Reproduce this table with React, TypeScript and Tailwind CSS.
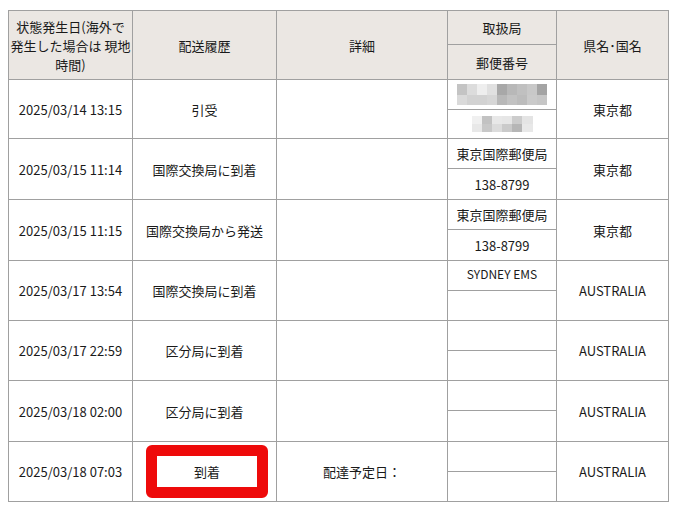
const rows = [
  { date: '2025/03/14 13:15', status: '引受', office: 'mosaic', zip: 'mosaic', pref: '東京都' },
  { date: '2025/03/15 11:14', status: '国際交換局に到着', office: '東京国際郵便局', zip: '138-8799', pref: '東京都' },
  { date: '2025/03/15 11:15', status: '国際交換局から発送', office: '東京国際郵便局', zip: '138-8799', pref: '東京都' },
  { date: '2025/03/17 13:54', status: '国際交換局に到着', office: 'SYDNEY EMS', zip: '', pref: 'AUSTRALIA' },
  { date: '2025/03/17 22:59', status: '区分局に到着', office: '', zip: '', pref: 'AUSTRALIA' },
  { date: '2025/03/18 02:00', status: '区分局に到着', office: '', zip: '', pref: 'AUSTRALIA' },
  { date: '2025/03/18 07:03', status: '到着', office: '', zip: '', pref: 'AUSTRALIA', detail: '配達予定日：', mark: true },
];

// pixelated blur over the first post office name / zip
const officeTiles = [
  'bg-[#c4c4c4]', 'bg-[#dcdcdc]', 'bg-[#eeeeee]', 'bg-[#e0e0e0]', 'bg-[#a8a8a8]', 'bg-[#b8b8b8]', 'bg-[#c0c0c0]', 'bg-[#c8c8c8]', 'bg-[#a4a4a4]',
  'bg-[#dadada]', 'bg-[#d2d2d2]', 'bg-[#d2d2d2]', 'bg-[#d6d6d6]', 'bg-[#b8b8b8]', 'bg-[#c2c2c2]', 'bg-[#bcbcbc]', 'bg-[#cacaca]', 'bg-[#c6c6c6]',
];
const zipTiles = [
  'bg-[#f0f0f0]', 'bg-[#c2c2c2]', 'bg-[#e8e8e8]', 'bg-[#e6e6e6]', 'bg-[#cccccc]', 'bg-[#e4e4e4]',
  'bg-[#e8e8e8]', 'bg-[#c8c8c8]', 'bg-[#dcdcdc]', 'bg-[#cacaca]', 'bg-[#b6b6b6]', 'bg-[#e8e8e8]',
];

function Mosaic({ tiles, cols, w }: { tiles: string[]; cols: number; w: string }) {
  return (
    <div className={`mx-auto grid ${w} ${cols === 9 ? 'grid-cols-9' : 'grid-cols-6'}`}>
      {tiles.map((t, i) => (
        <div key={i} className={`${cols === 9 ? 'h-[10.5px]' : 'h-[8px]'} ${t}`} />
      ))}
    </div>
  );
}

const cell = 'border border-[#a0a0a0] text-center align-middle p-0';
const head = 'border border-[#a0a0a0] text-center align-middle p-0 font-normal bg-[#ebe7e3]';

export default function App() {
  return (
    <div className="bg-white w-[674px] h-[510px] pt-[10px] pl-[8px] text-[13px] leading-[19px] text-[#1a1a1a] font-['Noto_Sans_CJK_JP','Noto_Sans',sans-serif]">
      <table className="table-fixed border-collapse w-[660px]">
        <colgroup>
          <col className="w-[124px]" />
          <col className="w-[144px]" />
          <col className="w-[171px]" />
          <col className="w-[109px]" />
          <col className="w-[112px]" />
        </colgroup>
        <thead>
          <tr className="h-[34px]">
            <th rowSpan={2} className={head}>
              状態発生日(海外で<br />発生した場合は 現地<br />時間)
            </th>
            <th rowSpan={2} className={head}>配送履歴</th>
            <th rowSpan={2} className={head}>詳細</th>
            <th className={head}>取扱局</th>
            <th rowSpan={2} className={head}>県名･国名</th>
          </tr>
          <tr className="h-[35px]">
            <th className={head}>郵便番号</th>
          </tr>
        </thead>
        <tbody>
          {rows.map((r, i) => [
            <tr key={`${i}a`} className="h-[30px]">
              <td rowSpan={2} className={cell}>{r.date}</td>
              <td rowSpan={2} className={cell}>
                {r.mark ? (
                  <div className="ml-[13px] w-[122px] h-[53px] border-[11px] border-[#ee0a0a] rounded-[6px] flex items-center justify-center">
                    {r.status}
                  </div>
                ) : (
                  r.status
                )}
              </td>
              <td rowSpan={2} className={cell}>{r.detail ?? ''}</td>
              <td className={`${cell} ${r.office === 'SYDNEY EMS' ? 'text-[12px] align-top pt-[3px]' : ''}`}>
                {r.office === 'mosaic' ? <Mosaic tiles={officeTiles} cols={9} w="w-[90px]" /> : r.office}
              </td>
              <td rowSpan={2} className={cell}>{r.pref}</td>
            </tr>,
            <tr key={`${i}b`} className={i === 0 ? 'h-[29px]' : i === 3 || i === 4 || i === 6 ? 'h-[30px]' : 'h-[31px]'}>
              <td className={cell}>
                {r.zip === 'mosaic' ? <Mosaic tiles={zipTiles} cols={6} w="w-[61px]" /> : r.zip}
              </td>
            </tr>,
          ])}
        </tbody>
      </table>
    </div>
  );
}
